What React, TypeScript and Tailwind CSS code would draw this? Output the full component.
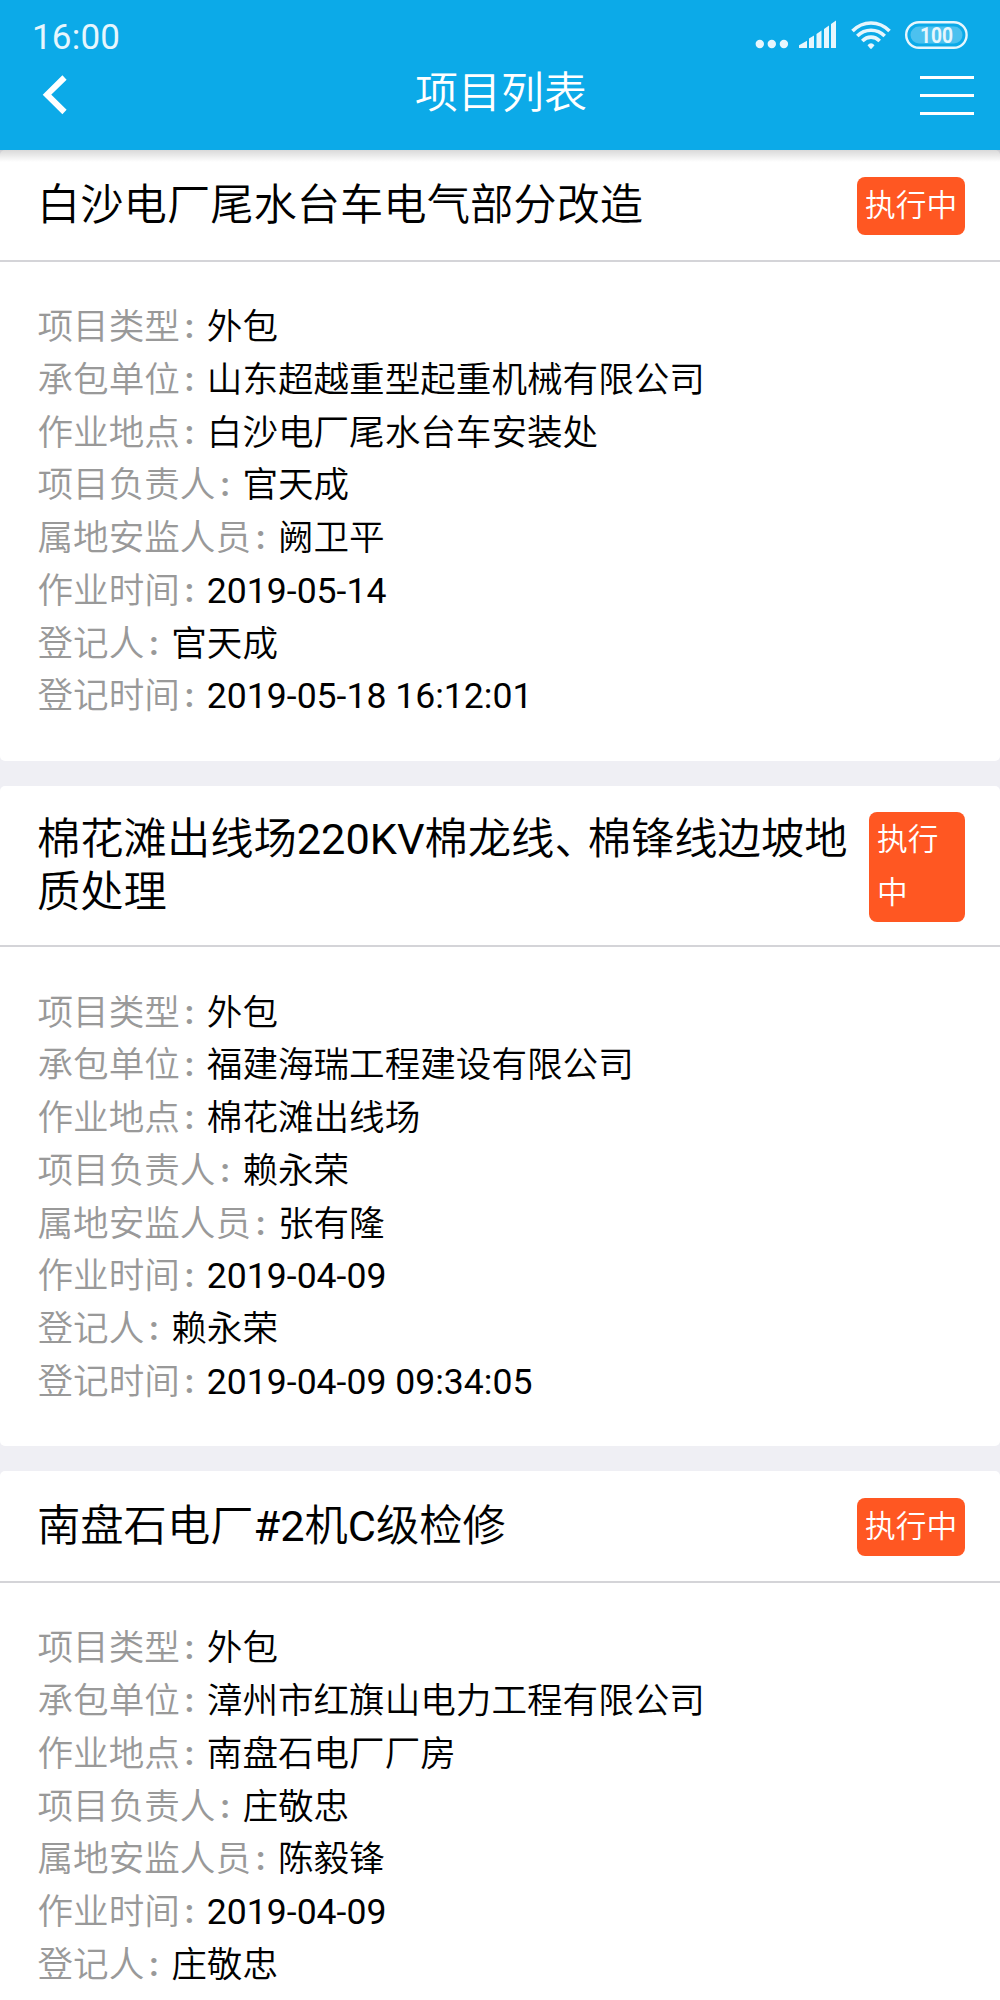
import React from 'react';

interface Project {
  title: string;
  wrapStatus?: boolean;
  fields: [string, string][];
}

const projects: Project[] = [
  {
    title: '白沙电厂尾水台车电气部分改造',
    fields: [
      ['项目类型', '外包'],
      ['承包单位', '山东超越重型起重机械有限公司'],
      ['作业地点', '白沙电厂尾水台车安装处'],
      ['项目负责人', '官天成'],
      ['属地安监人员', '阙卫平'],
      ['作业时间', '2019-05-14'],
      ['登记人', '官天成'],
      ['登记时间', '2019-05-18 16:12:01'],
    ],
  },
  {
    title: '棉花滩出线场220KV棉龙线、棉锋线边坡地质处理',
    wrapStatus: true,
    fields: [
      ['项目类型', '外包'],
      ['承包单位', '福建海瑞工程建设有限公司'],
      ['作业地点', '棉花滩出线场'],
      ['项目负责人', '赖永荣'],
      ['属地安监人员', '张有隆'],
      ['作业时间', '2019-04-09'],
      ['登记人', '赖永荣'],
      ['登记时间', '2019-04-09 09:34:05'],
    ],
  },
  {
    title: '南盘石电厂#2机C级检修',
    fields: [
      ['项目类型', '外包'],
      ['承包单位', '漳州市红旗山电力工程有限公司'],
      ['作业地点', '南盘石电厂厂房'],
      ['项目负责人', '庄敬忠'],
      ['属地安监人员', '陈毅锋'],
      ['作业时间', '2019-04-09'],
      ['登记人', '庄敬忠'],
    ],
  },
];

// Latin runs are set in regular weight, the comma is narrowed
const MixedText: React.FC<{ text: string }> = ({ text }) => (
  <>
    {text.split(/([\x20-\x7e]+|、)/).map((part, i) => {
      if (part === '、') return <span key={i} className="tracking-[-10px]">{part}</span>;
      if (i % 2 === 1) return <span key={i} className="font-normal">{part}</span>;
      return part;
    })}
  </>
);

const StatusIcons: React.FC = () => (
  <svg width="216" height="30" viewBox="0 0 216 30" className="text-[#e7f6fd]" fill="currentColor">
    <circle cx="4.800" cy="24" r="4.2" />
    <circle cx="16.800" cy="24" r="4.2" />
    <circle cx="28.900" cy="24" r="4.2" />

    <path d="M44 28v-2.800l8-4.400V28zM54 28v-9.500l5-3V28zM61.500 28V14l5-3.500V28zM69 28V9l5-3.500V28zM76 28V4l5-3.500V28z" />

    {/* Wifi */}
    <g fill="none" stroke="currentColor" strokeWidth="3.600">
      <path d="M97.500 11C108 .3 124 .3 134.500 11" />
      <path d="M102.300 16C110 8.300 122 8.300 129.700 16" />
      <path d="M107.300 21C112.500 15.800 119.500 15.800 124.700 21" />
    </g>
    <path d="M112.500 25.200Q116 21.500 119.500 25.200L116.800 28.600Q116 29.300 115.200 28.600z" />

    {/* Battery */}
    <rect x="151.200" y="2.200" width="60.400" height="25.600" rx="12.800" fill="none" stroke="currentColor" strokeWidth="2.400" />
    <rect x="155.500" y="6.500" width="52" height="17" rx="8.500" fill="#4cc1ef" />
    <text x="181.500" y="22.800" textAnchor="middle" fontSize="22" fontWeight="700" fontFamily="Roboto" textLength="33" lengthAdjust="spacingAndGlyphs">100</text>
  </svg>
);

const Header: React.FC = () => (
  <header className="relative z-10 h-[150px] bg-[#0caae8] text-white">
    <div className="flex h-[58px] items-start justify-between pl-8 pr-[29px] pt-5">
      <span className="pt-[2px] text-[35px] leading-[32px] tracking-[0.2px] text-[#e7f6fd]">16:00</span>
      <StatusIcons />
    </div>
    <div className="grid h-[72px] grid-cols-3 items-center">
      <button className="pl-[42px] pt-[2px]" aria-label="返回">
        <svg width="26" height="40" viewBox="0 0 26 40" fill="none" stroke="white" strokeWidth="6">
          <path d="M22.500 2.500L5 19.700L22.500 37" />
        </svg>
      </button>
      <h1 className="pb-[3px] pl-[2px] text-center text-[43px] font-[350] leading-[60px]">项目列表</h1>
      <button className="flex flex-col items-end gap-[15px] pr-[26px] pt-[2px]" aria-label="菜单">
        <span className="h-[3px] w-[54px] bg-white" />
        <span className="h-[3px] w-[54px] bg-white" />
        <span className="h-[3px] w-[54px] bg-white" />
      </button>
    </div>
    <div className="absolute inset-x-0 top-full h-3 bg-gradient-to-b from-black/15 to-transparent" />
  </header>
);

const ProjectCard: React.FC<{ project: Project }> = ({ project }) => (
  <section className="rounded-[5px] bg-white">
    <div
      className={`flex items-start justify-between border-b-2 border-[#d4d4d8] pl-[37px] pr-[35px] ${
        project.wrapStatus ? 'pb-[23px] pt-[26px]' : 'pb-[25px] pt-[27px]'
      }`}
    >
      <h2 className="w-[820px] pt-[1.500px] text-[43.300px] font-[350] leading-[53px] text-black">
        <MixedText text={project.title} />
      </h2>
      <span
        className={`shrink-0 rounded-lg bg-[#ff5722] py-[2.500px] pl-2 text-[30.700px] font-[350] leading-[52.700px] text-white ${
          project.wrapStatus ? 'w-[96px]' : 'w-[108px]'
        }`}
      >
        {project.wrapStatus ? <>执行<br />中</> : '执行中'}
      </span>
    </div>
    <dl className="px-[37.500px] pb-[37.500px] pt-[39.500px] text-[35.600px] font-[350] leading-[52.750px]">
      {project.fields.map(([label, value]) => (
        <div key={label} className="flex h-[52.750px] whitespace-nowrap">
          <dt className="flex text-[#999999]">
            {label}
            <span className="w-[27px] pl-[5px] text-[33px] font-bold">:</span>
          </dt>
          <dd className="text-black">
            <MixedText text={value} />
          </dd>
        </div>
      ))}
    </dl>
  </section>
);

const App: React.FC = () => {
  return (
    <div className="h-[2000px] w-[1000px] overflow-hidden bg-[#efeff4] font-['Roboto','Noto_Sans_CJK_SC',sans-serif]">
      <Header />
      <main className="flex flex-col gap-[25px]">
        {projects.map((project) => (
          <ProjectCard key={project.title} project={project} />
        ))}
      </main>
    </div>
  );
};

export default App;
